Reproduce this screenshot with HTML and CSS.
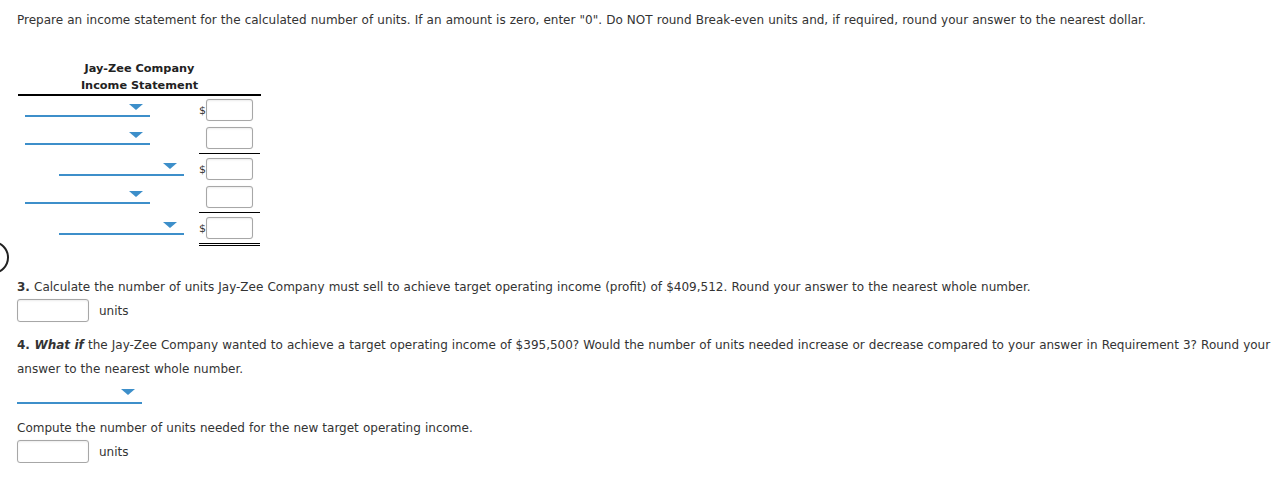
FILE: index.html
```html
<!DOCTYPE html>
<html lang="en">
<head>
<meta charset="utf-8">
<title>Jay-Zee Company</title>
<link rel="stylesheet" href="styles.css">
</head>
<body>
<div class="page">
  <p class="intro">Prepare an income statement for the calculated number of units. If an amount is zero, enter "0". Do NOT round Break-even units and, if required, round your answer to the nearest dollar.</p>

  <div class="statement">
    <div class="st-head">
      <div>Jay-Zee Company</div>
      <div>Income Statement</div>
    </div>

    <div class="row">
      <div class="label"><div class="dd"><span class="tri"></span></div></div>
      <div class="amt"><span class="cur">$</span><span class="inp"></span></div>
    </div>
    <div class="row sub">
      <div class="label"><div class="dd"><span class="tri"></span></div></div>
      <div class="amt"><span class="cur"></span><span class="inp"></span></div>
    </div>
    <div class="row">
      <div class="label"><div class="dd indent"><span class="tri"></span></div></div>
      <div class="amt"><span class="cur">$</span><span class="inp"></span></div>
    </div>
    <div class="row sub">
      <div class="label"><div class="dd"><span class="tri"></span></div></div>
      <div class="amt"><span class="cur"></span><span class="inp"></span></div>
    </div>
    <div class="row total">
      <div class="label"><div class="dd indent"><span class="tri"></span></div></div>
      <div class="amt"><span class="cur">$</span><span class="inp"></span></div>
    </div>
  </div>

  <div class="ring"></div>

  <p class="q q3"><b>3.</b> Calculate the number of units Jay-Zee Company must sell to achieve target operating income (profit) of $409,512. Round your answer to the nearest whole number.</p>
  <div class="units-row"><span class="uinp"></span><span class="unit">units</span></div>

  <p class="q q4"><b>4. <i>What if</i></b> the Jay-Zee Company wanted to achieve a target operating income of $395,500? Would the number of units needed increase or decrease compared to your answer in Requirement 3? Round your answer to the nearest whole number.</p>
  <div class="dd solo"><span class="tri"></span></div>

  <p class="q q5">Compute the number of units needed for the new target operating income.</p>
  <div class="units-row"><span class="uinp"></span><span class="unit">units</span></div>
</div>
</body>
</html>
```

FILE: styles.css
```css
html, body {
  margin: 0;
  padding: 0;
  background: #ffffff;
}

.page {
  position: relative;
  padding: 11px 0 0 17px;
  font-family: "DejaVu Sans", Verdana, sans-serif;
  font-size: 12px;
  word-spacing: 0.3px;
  color: #333333;
}

.intro {
  margin: 0;
  line-height: 18px;
}

.statement {
  margin: 29px 0 0 1px;
  width: 243px;
}

.st-head {
  padding-top: 2px;
  text-align: center;
  font-weight: bold;
  font-size: 11.3px;
  line-height: 17px;
  word-spacing: 0;
  color: #222222;
  border-bottom: 2px solid #000000;
}

.row {
  display: flex;
}

.row.sub {
  margin-bottom: 1px;
}

.label {
  width: 181px;
  height: 28px;
}

.amt {
  width: 61px;
  height: 28px;
  display: flex;
  align-items: center;
}

.row.sub .amt {
  padding-bottom: 1px;
  border-bottom: 1px solid #000000;
}

.row.total .amt {
  padding-bottom: 1px;
  border-bottom: 3px double #000000;
}

.cur {
  width: 7px;
  font-size: 11px;
  line-height: 1;
  color: #333333;
}

.inp {
  display: block;
  width: 45px;
  height: 20px;
  border: 1px solid #a7a7a7;
  border-radius: 3px;
  background: #ffffff;
  box-shadow: inset 0 1px 2px rgba(0, 0, 0, 0.08), 0 0 1px rgba(0, 0, 0, 0.15);
}

.dd {
  position: relative;
  box-sizing: border-box;
  width: 125px;
  height: 21px;
  margin: 0 0 0 7px;
  padding-top: 3px;
  border-bottom: 2px solid #3d8fca;
}

.dd.indent {
  margin-left: 41px;
}

.tri {
  position: absolute;
  right: 7px;
  top: 8px;
  width: 0;
  height: 0;
  border-left: 7px solid transparent;
  border-right: 7px solid transparent;
  border-top: 6px solid #3d8fca;
}

.ring {
  position: absolute;
  left: -24px;
  top: 241px;
  width: 29px;
  height: 29px;
  border: 2px solid #222222;
  border-radius: 50%;
}

.q {
  margin: 0;
  line-height: 24px;
}

.q3 {
  margin-top: 29px;
}

.q4 {
  margin-top: 11px;
}

.q5 {
  margin-top: 12px;
}

.units-row {
  display: flex;
  align-items: center;
  height: 23px;
  margin-top: 0;
}

.uinp {
  display: block;
  box-sizing: border-box;
  width: 72px;
  height: 23px;
  border: 1px solid #a7a7a7;
  border-radius: 3px;
  box-shadow: inset 0 1px 2px rgba(0, 0, 0, 0.08), 0 0 1px rgba(0, 0, 0, 0.15);
}

.unit {
  margin-left: 10px;
}

.dd.solo {
  margin: 3px 0 0 0;
  height: 20px;
}

.dd.solo .tri {
  right: 7px;
  top: 5px;
}
```
